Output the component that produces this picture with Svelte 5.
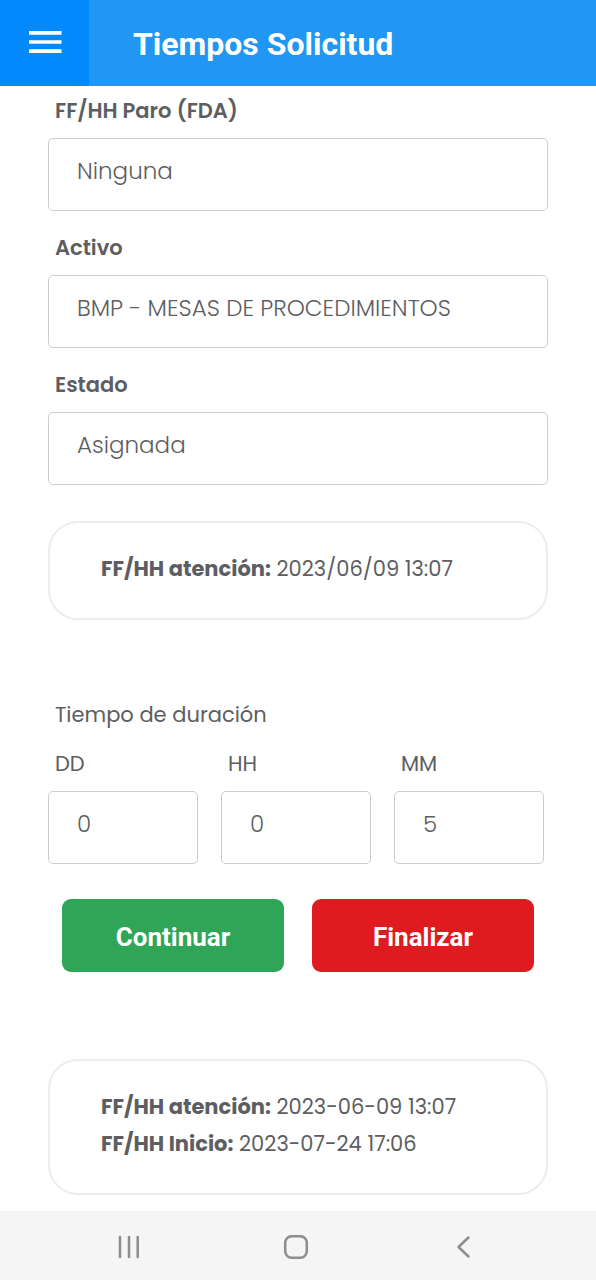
<script>
  let days = $state('0');
  let hours = $state('0');
  let minutes = $state('5');

  const fields = [
    { id: 'paro', label: 'FF/HH Paro (FDA)', value: 'Ninguna' },
    { id: 'activo', label: 'Activo', value: 'BMP - MESAS DE PROCEDIMIENTOS' },
    { id: 'estado', label: 'Estado', value: 'Asignada' }
  ];
</script>

<div class="screen">
  <header>
    <button class="menu" type="button" aria-label="Menú">
      <svg width="34" height="24" viewBox="0 0 34 24" aria-hidden="true">
        <path d="M1 2.9H33.500M1 12H33.500M1 21.100H33.500" stroke="#fff" stroke-width="3.600" />
      </svg>
    </button>
    <h1>Tiempos Solicitud</h1>
  </header>

  <main>
    <div class="fields">
      {#each fields as field (field.id)}
        <div class="field">
          <label class="strong" for={field.id}>{field.label}</label>
          <input id={field.id} type="text" value={field.value} readonly />
        </div>
      {/each}
    </div>

    <section class="card first">
      <p><b>FF/HH atención:</b> <span>2023/06/09 13:07</span></p>
    </section>

    <fieldset>
      <legend>Tiempo de duración</legend>
      <div class="duration">
        <div class="field">
          <label for="dd">DD</label>
          <input id="dd" type="text" inputmode="numeric" bind:value={days} />
        </div>
        <div class="field">
          <label for="hh">HH</label>
          <input id="hh" type="text" inputmode="numeric" bind:value={hours} />
        </div>
        <div class="field">
          <label for="mm">MM</label>
          <input id="mm" type="text" inputmode="numeric" bind:value={minutes} />
        </div>
      </div>
    </fieldset>

    <div class="actions">
      <button class="continue" type="button">Continuar</button>
      <button class="finish" type="button">Finalizar</button>
    </div>

    <section class="card last">
      <p><b>FF/HH atención:</b> <span>2023-06-09 13:07</span></p>
      <p><b>FF/HH Inicio:</b> <span>2023-07-24 17:06</span></p>
    </section>
  </main>

  <nav>
    <button type="button" aria-label="Recientes">
      <svg width="28" height="28" viewBox="0 0 28 28" aria-hidden="true">
        <path d="M5 4V24M14 4V24M22.700 4V24" />
      </svg>
    </button>
    <button type="button" aria-label="Inicio">
      <svg width="28" height="28" viewBox="0 0 28 28" aria-hidden="true">
        <rect x="3.200" y="3.200" width="21.600" height="21.600" rx="6.500" />
      </svg>
    </button>
    <button type="button" aria-label="Atrás">
      <svg width="28" height="28" viewBox="0 0 28 28" aria-hidden="true">
        <path d="M19.500 4.500L9.500 14L19.500 23.500" />
      </svg>
    </button>
  </nav>
</div>

<style>
  :global(body) {
    margin: 0;
    background: #fff;
  }

  .screen {
    display: flex;
    flex-direction: column;
    min-height: 100vh;
    color: #5d5e61;
    font-family: Poppins, Inter, sans-serif;
    font-size: 21px;
  }

  .screen :is(button, input) {
    box-sizing: border-box;
    margin: 0;
    font-family: inherit;
  }

  header {
    display: flex;
    align-items: stretch;
    height: 86px;
    background: #2196f3;
  }

  .menu {
    display: grid;
    place-items: center;
    width: 89px;
    padding: 0 0 2px;
    border: 0;
    background: #0289fb;
  }

  h1 {
    margin: 0;
    padding-left: 44px;
    color: #fff;
    font: 700 32px/88px Roboto, sans-serif;
  }

  main {
    flex: 1;
    display: flex;
    flex-direction: column;
    padding: 9px 48px 15px;
  }

  .fields {
    display: grid;
    gap: 21px;
  }

  .field {
    display: flex;
    flex-direction: column;
    gap: 11px;
    min-width: 0;
  }

  label,
  legend {
    padding: 0 7px;
    line-height: 32px;
  }

  .strong {
    font-weight: 600;
  }

  input {
    width: 100%;
    height: 73px;
    padding: 0 28px 7px;
    border: 1px solid #cdcdcf;
    border-radius: 5px;
    background: #fff;
    color: inherit;
    font-size: 23px;
    font-weight: 300;
  }

  .card {
    padding: 27px 51px 31px;
    border: 2px solid #ededed;
    border-radius: 30px;
    line-height: 37px;
  }

  .card p {
    margin: 0;
  }

  .card b {
    font-weight: 700;
  }

  .first {
    margin-top: 36px;
  }

  .last {
    margin-top: 87px;
  }

  fieldset {
    min-width: 0;
    margin: 79px 0 0;
    padding: 0;
    border: 0;
  }

  .duration {
    display: grid;
    grid-template-columns: repeat(3, 1fr);
    gap: 23px;
    padding: 17px 4px 0 0;
  }

  .actions {
    display: grid;
    grid-template-columns: 1fr 1fr;
    gap: 28px;
    margin-top: 35px;
    padding: 0 14px;
  }

  .actions button {
    height: 73px;
    padding: 3px 0 0;
    border: 0;
    border-radius: 9px;
    color: #fff;
    font: 700 26px Roboto, sans-serif;
  }

  .continue {
    background: #2fa557;
  }

  .finish {
    background: #df1b20;
  }

  nav {
    display: flex;
    justify-content: space-around;
    align-items: center;
    height: 69px;
    padding: 0 50px 0 46px;
    background: #f5f5f5;
  }

  nav button {
    display: grid;
    padding: 2px 0 0;
    border: 0;
    background: none;
  }

  nav svg {
    fill: none;
    stroke: #8d8d8d;
    stroke-width: 2.5;
    stroke-linecap: round;
    stroke-linejoin: round;
  }
</style>
